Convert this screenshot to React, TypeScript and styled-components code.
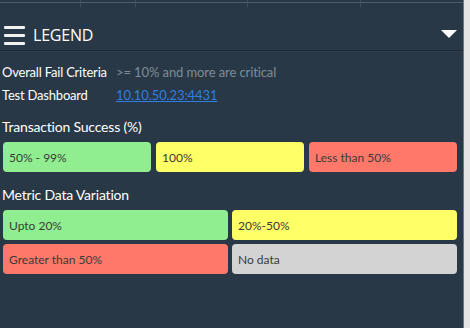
import React from "react";
import styled, { createGlobalStyle } from "styled-components";

const Global = createGlobalStyle`
  html, body { margin: 0; padding: 0; background: #293846; }
  body { font-family: Lato, "Noto Sans", sans-serif; }
`;

const Page = styled.div`
  display: flex;
  width: 470px;
  height: 328px;
  overflow: hidden;
`;

const Panel = styled.div`
  width: 463px;
  height: 328px;
  background: #293846;
  display: flex;
  flex-direction: column;
`;

const Track = styled.div`
  width: 6px;
  height: 328px;
  background: #e4e4e4;
  border-left: 1px solid #6b7680;
`;

const TopGrid = styled.div`
  height: 7px;
  display: flex;
  position: relative;
`;

const TopLine = styled.div`
  position: absolute;
  left: 0;
  right: 0;
  top: 2px;
  height: 1px;
  background: #4c5c6a;
`;

const TopCell = styled.div<{ $w: number }>`
  width: ${(p) => p.$w}px;
  height: 7px;
  border-right: 1px solid #3f4e5c;
  box-sizing: border-box;
`;

const Header = styled.div`
  height: 44px;
  box-sizing: border-box;
  display: flex;
  align-items: center;
  padding: 12px 6px 0 4px;
  border-bottom: 1px solid #1e2a35;
  box-shadow: 0 1px 0 #2f3e4c;
`;

const Burger = styled.div`
  width: 21px;
  height: 19px;
  display: flex;
  flex-direction: column;
  justify-content: space-between;
  margin-right: 8px;
  margin-top: 1px;
`;

const Bar = styled.span`
  display: block;
  height: 3px;
  border-radius: 1px;
  background: #f2f2f2;
`;

const Title = styled.div`
  flex: 1;
  color: #ffffff;
  font-family: "Open Sans", sans-serif;
  font-size: 16px;
  letter-spacing: -0.2px;
`;

const Caret = styled.div`
  width: 0;
  height: 0;
  border-left: 8px solid transparent;
  border-right: 8px solid transparent;
  border-top: 8px solid #ffffff;
  margin-top: -2px;
`;

const Body = styled.div`
  padding: 9px 6px 0 2px;
  display: flex;
  flex-direction: column;
`;

const InfoRow = styled.div`
  display: flex;
  align-items: center;
  height: 23px;
  font-size: 13px;
`;

const InfoLabel = styled.div`
  width: 114px;
  color: #ffffff;
  letter-spacing: -0.2px;
`;

const InfoValue = styled.div`
  color: #7f8c97;
  letter-spacing: -0.1px;
`;

const Link = styled.a`
  color: #2f7fe0;
  text-decoration: underline;
  letter-spacing: -0.1px;
`;

const SectionTitle = styled.div<{ $top: number }>`
  color: #ffffff;
  font-size: 14px;
  margin-top: ${(p) => p.$top}px;
  height: 18px;
  line-height: 18px;
  letter-spacing: -0.2px;
`;

const Grid = styled.div<{ $cols: number; $gap: number }>`
  display: grid;
  grid-template-columns: repeat(${(p) => p.$cols}, 1fr);
  gap: ${(p) => p.$gap}px;
  margin-top: 6px;
  padding-left: 1px;
`;

const Chip = styled.div<{ $bg: string }>`
  height: 30px;
  box-sizing: border-box;
  border-radius: 4px;
  background: ${(p) => p.$bg};
  color: #3a3a3a;
  font-size: 12px;
  display: flex;
  align-items: center;
  padding-left: 6px;
`;

const GREEN = "#90ee90";
const YELLOW = "#ffff66";
const RED = "#ff7869";
const GREY = "#d3d3d3";

export default function App() {
  return (
    <>
      <Global />
      <Page>
        <Panel>
          <TopGrid>
            <TopLine />
            <TopCell $w={81} />
            <TopCell $w={55} />
            <TopCell $w={112} />
            <TopCell $w={113} />
          </TopGrid>
          <Header>
            <Burger>
              <Bar />
              <Bar />
              <Bar />
            </Burger>
            <Title>LEGEND</Title>
            <Caret />
          </Header>
          <Body>
            <InfoRow>
              <InfoLabel>Overall Fail Criteria</InfoLabel>
              <InfoValue>&gt;= 10% and more are critical</InfoValue>
            </InfoRow>
            <InfoRow>
              <InfoLabel>Test Dashboard</InfoLabel>
              <Link href="#">10.10.50.23:4431</Link>
            </InfoRow>
            <SectionTitle $top={12}>Transaction Success (%)</SectionTitle>
            <Grid $cols={3} $gap={5}>
              <Chip $bg={GREEN}>50% - 99%</Chip>
              <Chip $bg={YELLOW}>100%</Chip>
              <Chip $bg={RED}>Less than 50%</Chip>
            </Grid>
            <SectionTitle $top={14}>Metric Data Variation</SectionTitle>
            <Grid $cols={2} $gap={4}>
              <Chip $bg={GREEN}>Upto 20%</Chip>
              <Chip $bg={YELLOW}>20%-50%</Chip>
              <Chip $bg={RED}>Greater than 50%</Chip>
              <Chip $bg={GREY}>No data</Chip>
            </Grid>
          </Body>
        </Panel>
        <Track />
      </Page>
    </>
  );
}
